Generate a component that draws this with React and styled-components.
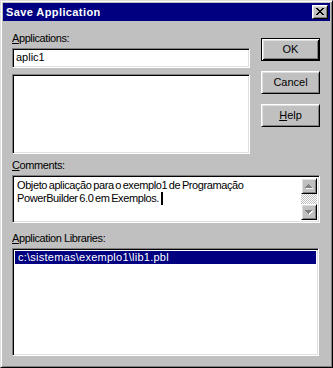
import React from "react";
import styled, { createGlobalStyle, css } from "styled-components";

const Global = createGlobalStyle`
  html, body { margin: 0; padding: 0; background: #c0c0c0; }
  body { font-family: "Liberation Sans", Arial, sans-serif; font-size: 11px; color: #000; }
  * { box-sizing: border-box; }
`;

const sunken = css`
  border: 1px solid;
  border-color: #808080 #fff #fff #808080;
  box-shadow: inset 1px 1px #000, inset -1px -1px #dfdfdf;
  background: #fff;
`;

const raised = css`
  border: 1px solid;
  border-color: #fff #000 #000 #fff;
  box-shadow: inset 1px 1px #dfdfdf, inset -1px -1px #808080;
  background: #c0c0c0;
`;

const Window = styled.div`
  width: 333px;
  height: 368px;
  background: #c0c0c0;
  border: 1px solid;
  border-color: #dfdfdf #000 #000 #dfdfdf;
  box-shadow: inset 1px 1px #fff, inset -1px -1px #808080;
  padding: 2px;
  display: flex;
  flex-direction: column;
`;

const TitleBar = styled.div`
  height: 18px;
  background: #000080;
  display: flex;
  align-items: center;
  padding: 0 2px 0 3px;
`;

const TitleText = styled.span`
  color: #fff;
  font-weight: bold;
  font-size: 11px;
  line-height: 13px;
  letter-spacing: 0.4px;
`;

const CloseButton = styled.div`
  ${raised};
  margin-left: auto;
  width: 16px;
  height: 14px;
  display: flex;
  align-items: center;
  justify-content: center;
  padding: 0 1px 1px 0;
`;

const Body = styled.div`
  padding: 11px 0 0 9px;
  display: flex;
  flex-direction: column;
`;

const TopRow = styled.div`
  display: flex;
  gap: 11px;
`;

const LeftCol = styled.div`
  width: 238px;
  display: flex;
  flex-direction: column;
`;

const ButtonCol = styled.div`
  padding-top: 6px;
  display: flex;
  flex-direction: column;
  gap: 10px;
`;

const Label = styled.div`
  height: 13px;
  line-height: 13px;
  margin-top: ${(p) => p.$top || 0}px;
  margin-bottom: 3px;
  white-space: nowrap;
  letter-spacing: -0.4px;
`;

const EditBox = styled.div`
  ${sunken};
  height: 20px;
  padding: 2px 3px;
  line-height: 13px;
`;

const ListBox = styled.div`
  ${sunken};
  width: ${(p) => p.$w || 238}px;
  height: ${(p) => p.$h}px;
  margin-top: ${(p) => p.$top || 0}px;
  padding: 2px;
`;

const ListItem = styled.div`
  height: 13px;
  line-height: 13px;
  padding-left: 3px;
  white-space: nowrap;
  letter-spacing: 0.25px;
  background: ${(p) => (p.$selected ? "#000080" : "transparent")};
  color: ${(p) => (p.$selected ? "#fff" : "#000")};
`;

const Button = styled.div`
  width: 59px;
  height: 23px;
  display: flex;
  align-items: center;
  justify-content: center;
  line-height: 13px;
  ${(p) =>
    p.$default
      ? css`
          border: 1px solid #000;
          background: #c0c0c0;
          box-shadow: inset 1px 1px #fff, inset -1px -1px #000,
            inset 2px 2px #dfdfdf, inset -2px -2px #808080;
        `
      : raised};
`;

const MemoBox = styled.div`
  ${sunken};
  width: 308px;
  height: 48px;
  padding: 1px;
  display: flex;
`;

const MemoText = styled.div`
  flex: 1;
  padding: 2px 3px 0 3px;
  line-height: 13px;
  letter-spacing: -0.4px;
  word-spacing: -1px;
`;

const Caret = styled.span`
  display: inline-block;
  width: 2px;
  height: 13px;
  background: #000;
  vertical-align: top;
  margin-left: 2px;
`;

const ScrollBar = styled.div`
  width: 16px;
  margin: 1px;
  display: flex;
  flex-direction: column;
`;

const ScrollButton = styled.div`
  ${raised};
  width: 16px;
  height: 16px;
  display: flex;
  align-items: center;
  justify-content: center;
`;

const ScrollTrack = styled.div`
  flex: 1;
  background-image: repeating-conic-gradient(#c0c0c0 0 25%, #fff 0 50%);
  background-size: 2px 2px;
`;

const CloseGlyph = () => (
  <svg width="8" height="7" viewBox="0 0 8 7" shapeRendering="crispEdges">
    <path
      d="M0 0h2v1H0zM6 0h2v1H6zM1 1h2v1H1zM5 1h2v1H5zM2 2h4v1H2zM3 3h2v1H3zM2 4h4v1H2zM1 5h2v1H1zM5 5h2v1H5zM0 6h2v1H0zM6 6h2v1H6z"
      fill="#000"
    />
  </svg>
);

const Arrow = ({ down }) => {
  const up = "M3 0h1v1H3zM2 1h3v1H2zM1 2h5v1H1zM0 3h7v1H0z";
  const dn = "M0 0h7v1H0zM1 1h5v1H1zM2 2h3v1H2zM3 3h1v1H3z";
  const d = down ? dn : up;
  return (
    <svg width="8" height="5" viewBox="0 0 8 5" shapeRendering="crispEdges">
      <path d={d} fill="#fff" transform="translate(1 1)" />
      <path d={d} fill="#808080" />
    </svg>
  );
};

export default function App() {
  return (
    <>
      <Global />
      <Window>
        <TitleBar>
          <TitleText>Save Application</TitleText>
          <CloseButton>
            <CloseGlyph />
          </CloseButton>
        </TitleBar>
        <Body>
          <TopRow>
            <LeftCol>
              <Label>
                <u>A</u>pplications:
              </Label>
              <EditBox>aplic1</EditBox>
              <ListBox $h={80} $top={6} />
            </LeftCol>
            <ButtonCol>
              <Button $default>OK</Button>
              <Button>Cancel</Button>
              <Button>
                <span>
                  <u>H</u>elp
                </span>
              </Button>
            </ButtonCol>
          </TopRow>
          <Label $top={5}>
            <u>C</u>omments:
          </Label>
          <MemoBox>
            <MemoText>
              Objeto aplicação para o exemplo1 de Programação
              <br />
              PowerBuilder 6.0 em Exemplos.
              <Caret />
            </MemoText>
            <ScrollBar>
              <ScrollButton>
                <Arrow />
              </ScrollButton>
              <ScrollTrack />
              <ScrollButton>
                <Arrow down />
              </ScrollButton>
            </ScrollBar>
          </MemoBox>
          <Label $top={9}>
            <u>A</u>pplication Libraries:
          </Label>
          <ListBox $w={307} $h={108}>
            <ListItem $selected>c:\sistemas\exemplo1\lib1.pbl</ListItem>
          </ListBox>
        </Body>
      </Window>
    </>
  );
}
